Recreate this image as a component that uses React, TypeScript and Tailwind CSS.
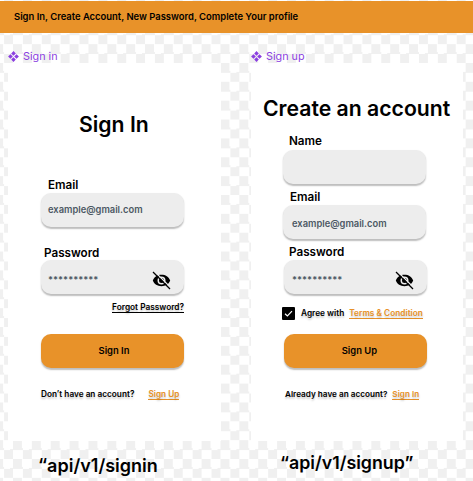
import type { ReactNode } from "react";

function Diamonds() {
  return (
    <svg className="h-[11px] w-[11px] shrink-0" viewBox="0 0 22 22" fill="#8b3fe0">
      <path d="M11 0.2 15.6 4.9 11 9.6 6.4 4.9ZM11 12.4 15.6 17.1 11 21.8 6.4 17.1ZM4.9 6.4 9.6 11 4.9 15.6 0.2 11ZM17.1 6.4 21.8 11 17.1 15.6 12.4 11Z" />
    </svg>
  );
}

function EyeOff() {
  return (
    <svg className="mt-[7px] h-[19px] w-[19px] shrink-0" viewBox="0 0 19 19" fill="none">
      <path
        fillRule="evenodd"
        fill="#000"
        d="M0.8 9.5C2.2 5.8 5.5 3.8 9.5 3.8S16.8 5.8 18.2 9.5C16.8 13.2 13.5 15.2 9.5 15.2S2.2 13.2 0.8 9.5ZM9.5 5.5A4 4 0 1 0 9.5 13.5A4 4 0 1 0 9.5 5.5Z"
      />
      <circle cx="9.5" cy="9.5" r="2.5" fill="#000" />
      <path d="M2.3 0.3 18.9 16.9" stroke="#ededed" strokeWidth="1.3" />
      <path d="M1 1 18 18" stroke="#000" strokeWidth="1.2" />
    </svg>
  );
}

function Label({ className, children }: { className: string; children: ReactNode }) {
  return <div className={`h-4 text-[11.7px] font-semibold leading-4 ${className}`}>{children}</div>;
}

function Field({ className = "", children }: { className?: string; children?: ReactNode }) {
  return (
    <div
      className={`flex h-[34px] w-[143px] items-center justify-between rounded-[10px] bg-[#ededed] pr-[13px] text-[9.35px] font-semibold text-[#4c5864] shadow-[0_1.5px_1.5px_rgba(0,0,0,0.26)] ${className}`}
    >
      {children}
    </div>
  );
}

function Button({ className = "", children }: { className?: string; children: ReactNode }) {
  return (
    <button
      className={`block h-[34px] w-[143px] rounded-[10px] bg-[#e89229] pt-px text-[9.4px] font-semibold shadow-[0_1.5px_1.5px_rgba(0,0,0,0.26)] ${className}`}
    >
      {children}
    </button>
  );
}

function Link({ className = "", children }: { className?: string; children: ReactNode }) {
  return (
    <a className={`border-b border-current leading-[10px] text-[#e89229] ${className}`}>{children}</a>
  );
}

export default function App() {
  return (
    <div className="h-[481px] w-[473px] overflow-hidden whitespace-nowrap bg-white bg-[repeating-conic-gradient(#ffffff_0_25%,#f0f0f0_0_50%)] bg-[length:18.86px_18.86px] bg-[position:13.03px_6.4px] pt-px font-['Inter',sans-serif] text-black">
      <header className="flex h-8 items-center bg-[#e89229] pl-3.5 text-[9.43px] font-semibold">
        Sign In, Create Account, New Password, Complete Your profile
      </header>
      <main className="flex gap-[30px] pl-2">
        <section className="w-[213px]">
          <div className="flex h-[30px] items-center gap-1 pt-[17px] text-[10.8px] leading-[14px] text-[#8b3fe0]">
            <Diamonds />
            Sign in
          </div>
          <div className="h-[378px] bg-white pl-[33px] pt-[46px]">
            <h1 className="h-[30px] pl-[38px] text-[21.2px] font-semibold leading-[30px]">Sign In</h1>
            <Label className="mt-[38px] pl-[7px]">Email</Label>
            <Field className="pl-[7px]">example@gmail.com</Field>
            <Label className="mt-[18px] pl-[3px]">Password</Label>
            <Field className="-mt-px pl-[7px]">
              <span className="pt-1.5">**********</span>
              <EyeOff />
            </Field>
            <div className="mt-2 flex h-[11px] w-[143px] justify-end text-[8.3px] font-semibold text-shadow-[0_2px_2px_rgba(0,0,0,0.22)]">
              <a className="border-b border-black leading-[10px]">Forgot Password?</a>
            </div>
            <Button className="mt-[21px] pl-[3px]">Sign In</Button>
            <div className="mt-[21px] flex items-start gap-[14px] text-[8.25px] font-semibold leading-[11px] text-shadow-[0_2px_2px_rgba(0,0,0,0.22)]">
              Don’t have an account?
              <Link>Sign Up</Link>
            </div>
          </div>
          <p className="h-10 pl-[30px] pt-[13px] text-[18px] font-semibold leading-6">“api/v1/signin</p>
        </section>
        <section className="w-[212px]">
          <div className="flex h-[30px] items-center gap-1 pt-[17px] text-[10.8px] leading-[14px] text-[#8b3fe0]">
            <Diamonds />
            Sign up
          </div>
          <div className="h-[378px] bg-white pl-8 pt-[30px]">
            <h1 className="-ml-5 h-[30px] text-[21.2px] font-semibold leading-[30px]">Create an account</h1>
            <Label className="mt-[10px] pl-[6px]">Name</Label>
            <Field className="mt-px" />
            <Label className="mt-[5px] pl-[7px]">Email</Label>
            <Field className="pl-[9px]">
              <span className="pt-1">example@gmail.com</span>
            </Field>
            <Label className="mt-[5px] pl-[6px]">Password</Label>
            <Field className="ml-px pl-2">
              <span className="pt-1.5">**********</span>
              <EyeOff />
            </Field>
            <div className="mt-[13px] flex h-[13px] items-center text-[8.3px] font-semibold text-shadow-[0_2px_2px_rgba(0,0,0,0.22)]">
              <svg className="-ml-px mr-1.5 h-[13px] w-[13px]" viewBox="0 0 13 13">
                <rect width="13" height="13" rx="1" fill="#000" />
                <path d="M3 6.7 5.4 9 10 4.1" fill="none" stroke="#fff" strokeWidth="1.2" />
              </svg>
              Agree with
              <Link className="ml-[5px]">Terms &amp; Condition</Link>
            </div>
            <Button className="ml-[1.4px] mt-[14px] pl-[7px]">Sign Up</Button>
            <div className="mt-[21px] flex items-start gap-[5px] pl-0.5 text-[8.2px] font-semibold leading-[11px] text-shadow-[0_2px_2px_rgba(0,0,0,0.22)]">
              Already have an account?
              <Link>Sign In</Link>
            </div>
          </div>
          <p className="h-10 pl-[29px] pt-[10px] text-[17.8px] font-semibold leading-6">“api/v1/signup”</p>
        </section>
      </main>
    </div>
  );
}
